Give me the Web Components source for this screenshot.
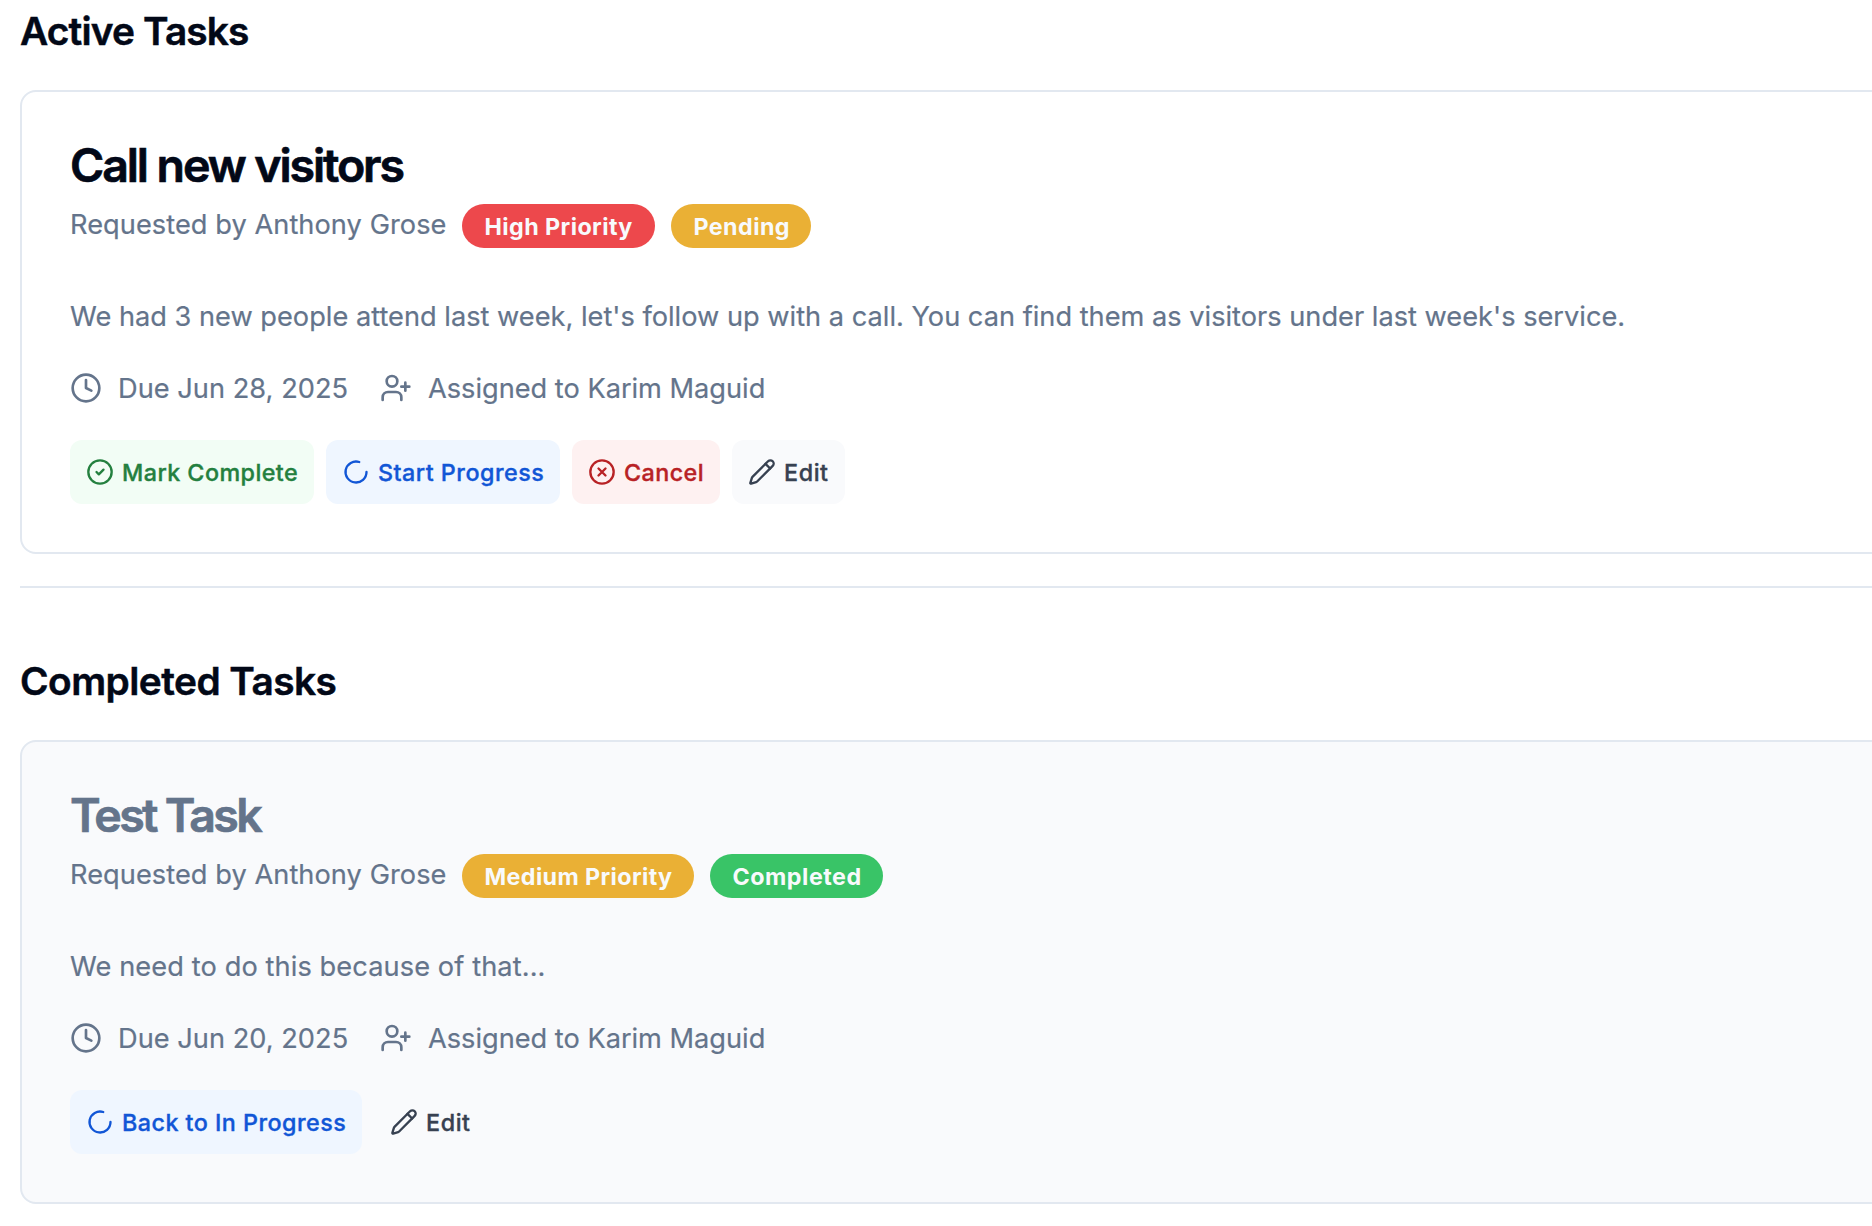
<!DOCTYPE html>
<html lang="en">
<head>
<meta charset="utf-8">
<title>Tasks</title>
<style>
  html, body { margin: 0; background: #fff; overflow: hidden; }
  body { font-family: Inter, "Liberation Sans", sans-serif; color: #020817; }
</style>
</head>
<body>
<task-page>
  <task-section>
    <span slot="title" style="letter-spacing:-.84px">Active Tasks</span>
    <task-card>
      <span slot="title" style="letter-spacing:-2.09px">Call new visitors</span>
      <span slot="requester" style="letter-spacing:.06px">Requested by Anthony Grose</span>
      <task-badge slot="badges" tone="red" style="width:193px;letter-spacing:.42px">High Priority</task-badge>
      <task-badge slot="badges" tone="yellow" style="width:140px;letter-spacing:.42px">Pending</task-badge>
      <span slot="description" style="letter-spacing:.005px">We had 3 new people attend last week, let's follow up with a call. You can find them as visitors under last week's service.</span>
      <task-meta slot="meta" icon="clock" style="width:278px;letter-spacing:.03px">Due Jun 28, 2025</task-meta>
      <task-meta slot="meta" icon="user-plus" style="letter-spacing:-.01px">Assigned to Karim Maguid</task-meta>
      <task-button slot="actions" tone="green" icon="check" style="width:244px;letter-spacing:.45px">Mark Complete</task-button>
      <task-button slot="actions" tone="blue" icon="loader" style="width:234px;letter-spacing:.5px">Start Progress</task-button>
      <task-button slot="actions" tone="red" icon="x" style="width:148px;letter-spacing:.45px">Cancel</task-button>
      <task-button slot="actions" tone="gray" icon="pencil" style="width:113px;letter-spacing:.6px">Edit</task-button>
    </task-card>
  </task-section>
  <task-divider></task-divider>
  <task-section>
    <span slot="title" style="letter-spacing:-.54px">Completed Tasks</span>
    <task-card done>
      <span slot="title" style="letter-spacing:-2.7px">Test Task</span>
      <span slot="requester" style="letter-spacing:.06px">Requested by Anthony Grose</span>
      <task-badge slot="badges" tone="yellow" style="width:232px;letter-spacing:.38px">Medium Priority</task-badge>
      <task-badge slot="badges" tone="green" style="width:173px;letter-spacing:.52px">Completed</task-badge>
      <span slot="description" style="letter-spacing:.1px">We need to do this because of that...</span>
      <task-meta slot="meta" icon="clock" style="width:278px;letter-spacing:.02px">Due Jun 20, 2025</task-meta>
      <task-meta slot="meta" icon="user-plus" style="letter-spacing:-.01px">Assigned to Karim Maguid</task-meta>
      <task-button slot="actions" tone="blue" icon="loader" style="width:292px;letter-spacing:.48px">Back to In Progress</task-button>
      <task-button slot="actions" tone="gray" icon="pencil" style="width:113px;letter-spacing:.6px">Edit</task-button>
    </task-card>
  </task-section>
</task-page>
<script>
const define = (name, css, html) => customElements.define(name, class extends HTMLElement {
  constructor() {
    super();
    const markup = typeof html === 'function' ? html(this) : html;
    this.attachShadow({ mode: 'open' }).innerHTML = `<style>*{box-sizing:border-box}${css}</style>${markup}`;
  }
});

const ICONS = {
  clock: '<circle cx="12" cy="12" r="10"/><polyline points="12 6 12 12 16 14"/>',
  'user-plus': '<path d="M16 21v-2a4 4 0 0 0-4-4H6a4 4 0 0 0-4 4v2"/><circle cx="9" cy="7" r="4"/><path d="M19 8v6M22 11h-6"/>',
  check: '<circle cx="12" cy="12" r="10"/><path d="m9 12 2 2 4-4"/>',
  x: '<circle cx="12" cy="12" r="10"/><path d="m15 9-6 6M9 9l6 6"/>',
  loader: '<path d="M21 12a9 9 0 1 1-6.219-8.56"/>',
  pencil: '<path d="M21.174 6.812a1 1 0 0 0-3.986-3.987L3.842 16.174a2 2 0 0 0-.5.83l-1.321 4.352a.5.5 0 0 0 .623.622l4.353-1.32a2 2 0 0 0 .83-.497z"/><path d="m15 5 4 4"/>'
};
const icon = el => `<svg viewBox="0 0 24 24" fill="none" stroke="currentColor" stroke-width="2" stroke-linecap="round" stroke-linejoin="round" aria-hidden="true">${ICONS[el.getAttribute('icon')]}</svg>`;

define('task-page', `
  :host { display: flex; flex-direction: column; width: 1920px; padding: 2px 0 0 20px; }
`, '<slot></slot>');

define('task-section', `
  :host { display: block; }
  h3 { margin: 0 0 31px; font-size: 38.8px; line-height: 56px; font-weight: 600; padding-top: 1px; white-space: nowrap; -webkit-text-stroke: .5px currentColor; }
`, '<h3><slot name="title"></slot></h3><slot></slot>');

define('task-divider', `
  :host { display: block; height: 2px; margin: 32px 0 64px; background: #e2e8f0; }
`, '');

define('task-card', `
  :host { display: flex; flex-direction: column; box-sizing: border-box; height: 464px; padding: 49px 48px 47px; border: 2px solid #e2e8f0; border-radius: 16px; background: #fff; }
  :host([done]) { background: #f9fafc; }
  .title { font-size: 46.5px; line-height: 48px; font-weight: 600; white-space: nowrap; -webkit-text-stroke: .7px currentColor; }
  :host([done]) .title { color: #64748b; }
  .by { display: flex; gap: 16px; height: 44px; margin-top: 15px; color: #64748b; font-size: 27.2px; -webkit-text-stroke: .2px currentColor; }
  .by ::slotted(task-badge) { -webkit-text-stroke: 0; }
  .name { width: 376px; line-height: 42px; white-space: nowrap; }
  .desc { margin-top: 49px; color: #64748b; font-size: 27.2px; line-height: 40px; white-space: nowrap; -webkit-text-stroke: .2px currentColor; }
  .meta { display: flex; align-items: center; gap: 32px; height: 40px; margin-top: 31px; }
  .actions { display: flex; gap: 12px; margin-top: 32px; }
`, `
  <div class="title"><slot name="title"></slot></div>
  <div class="by"><div class="name"><slot name="requester"></slot></div><slot name="badges"></slot></div>
  <div class="desc"><slot name="description"></slot></div>
  <div class="meta"><slot name="meta"></slot></div>
  <div class="actions"><slot name="actions"></slot></div>
`);

define('task-badge', `
  :host { display: flex; align-items: center; flex: none; box-sizing: border-box; height: 44px; padding: 1px 0 0 22.5px; border-radius: 22px; font-size: 23.3px; line-height: 32px; font-weight: 700; color: #f8fafc; white-space: nowrap; }
  :host([tone=red]) { background: #ed484c; }
  :host([tone=yellow]) { background: #eab035; }
  :host([tone=green]) { background: #39c467; }
`, '<slot></slot>');

define('task-meta', `
  :host { display: flex; align-items: center; gap: 16px; flex: none; color: #64748b; font-size: 27.2px; line-height: 40px; white-space: nowrap; -webkit-text-stroke: .2px currentColor; }
  svg { width: 32px; height: 32px; flex: none; }
  span { padding-top: 1px; }
`, el => icon(el) + '<span><slot></slot></span>');

define('task-button', `
  :host { display: flex; align-items: center; flex: none; gap: 8px; box-sizing: border-box; height: 64px; padding: 0 0 0 16px; border-radius: 12px; font-size: 23.3px; line-height: 32px; font-weight: 500; white-space: nowrap; -webkit-text-stroke: .35px currentColor; }
  svg { width: 28px; height: 28px; flex: none; }
  span { padding-top: 1px; }
  :host([tone=green]) { background: #f2fdf5; color: #24803f; }
  :host([tone=blue]) { background: #eff6ff; color: #1156d6; }
  :host([tone=red]) { background: #fef1f1; color: #b82225; }
  :host([tone=gray]) { background: #f9fafc; color: #374151; }
`, el => icon(el) + '<span><slot></slot></span>');
</script>
</body>
</html>
